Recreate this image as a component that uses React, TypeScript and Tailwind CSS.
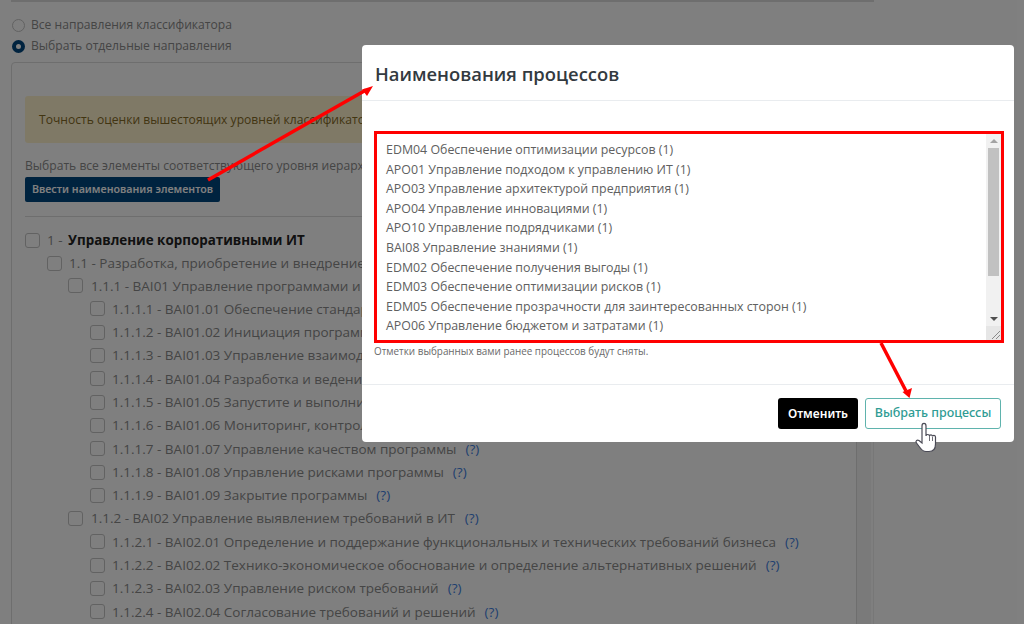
const rows: [number, string, string][] = [
  [0, '1.1 - Разработка, приобретение и внедрение ИТ-решений', ''],
  [1, '1.1.1 - BAI01 Управление программами и проектами', ''],
  [2, '1.1.1.1 - BAI01.01 Обеспечение стандартного подхода', ''],
  [2, '1.1.1.2 - BAI01.02 Инициация программы и проектов', ''],
  [2, '1.1.1.3 - BAI01.03 Управление взаимодействием', ''],
  [2, '1.1.1.4 - BAI01.04 Разработка и ведение планов', ''],
  [2, '1.1.1.5 - BAI01.05 Запустите и выполните программу', ''],
  [2, '1.1.1.6 - BAI01.06 Мониторинг, контроль и отчетность', ''],
  [2, '1.1.1.7 - BAI01.07 Управление качеством программы', '?'],
  [2, '1.1.1.8 - BAI01.08 Управление рисками программы', '?'],
  [2, '1.1.1.9 - BAI01.09 Закрытие программы', '?'],
  [1, '1.1.2 - BAI02 Управление выявлением требований в ИТ', '?'],
  [2, '1.1.2.1 - BAI02.01 Определение и поддержание функциональных и технических требований бизнеса', '?'],
  [2, '1.1.2.2 - BAI02.02 Технико-экономическое обоснование и определение альтернативных решений', '?'],
  [2, '1.1.2.3 - BAI02.03 Управление риском требований', '?'],
  [2, '1.1.2.4 - BAI02.04 Согласование требований и решений', '?'],
]

const processes = [
  'EDM04 Обеспечение оптимизации ресурсов (1)',
  'APO01 Управление подходом к управлению ИТ (1)',
  'APO03 Управление архитектурой предприятия (1)',
  'APO04 Управление инновациями (1)',
  'APO10 Управление подрядчиками (1)',
  'BAI08 Управление знаниями (1)',
  'EDM02 Обеспечение получения выгоды (1)',
  'EDM03 Обеспечение оптимизации рисков (1)',
  'EDM05 Обеспечение прозрачности для заинтересованных сторон (1)',
  'APO06 Управление бюджетом и затратами (1)',
]

const Checkbox = () => (
  <span className="h-[15px] w-[15px] shrink-0 rounded-[3px] border border-[#c4c4c4] bg-white" />
)

const App = () => {
  return (
    <div className="relative h-[624px] w-[1024px] overflow-hidden bg-white font-['Open_Sans',sans-serif] text-[13.5px] text-[#8a8a8a]">
      <div className="ml-[11px] h-[2px] w-[863px] bg-[#dcdcdc]" />
      <div className="flex h-[622px]">
        <div className="w-[857px] shrink-0 pl-[11px] pt-[13px]">
          <div className="flex h-[21px] items-center gap-[6px] pl-px">
            <span className="h-[13px] w-[13px] rounded-full border border-[#c4c4c4] bg-white" />
            <span className="text-[12.1px]">Все направления классификатора</span>
          </div>
          <div className="flex h-[21px] items-center gap-[6px] pl-px">
            <span className="h-[13px] w-[13px] rounded-full border-[4px] border-[#00467f] bg-white" />
            <span className="text-[12.1px]">Выбрать отдельные направления</span>
          </div>
          <div className="mt-[5px] h-[600px] rounded-t-[4px] border border-[#dcdcdc] px-[13px] pt-[33px]">
            <div className="flex h-[47px] items-center rounded-[3px] bg-[#fff3cd] px-[14px] pt-px text-[#856a25]">
              <span className="text-[12.1px]">Точность оценки вышестоящих уровней классификатора может быть снижена</span>
            </div>
            <p className="mt-[14px] text-[12.1px] leading-[17px]">Выбрать все элементы соответствующего уровня иерархии:</p>
            <button className="mt-[3px] block h-[25px] w-[195px] rounded-[2px] bg-[#00467f] font-['Noto_Sans',sans-serif] text-[10.7px] font-semibold text-white">
              Ввести наименования элементов
            </button>
            <div className="mt-[14px] h-px bg-[#dcdcdc]" />
            <div className="mt-[11px] flex h-[24px] items-center gap-[7px]">
              <Checkbox />
              <span>1 - <b className="ml-[2px] text-[13.4px] font-bold text-[#222222]">Управление корпоративными ИТ</b></span>
            </div>
            {rows.map(([level, text, help]) => (
              <div
                key={text}
                className={
                  level === 0
                    ? 'ml-[22px] flex h-[22px] items-center gap-[7px] whitespace-nowrap'
                    : level === 1
                      ? 'ml-[43px] flex h-[23.3px] items-center gap-[8px] whitespace-nowrap'
                      : 'ml-[65px] flex h-[23.3px] items-center gap-[7px] whitespace-nowrap'
                }
              >
                <Checkbox />
                <span>{text}</span>
                {help && <span className="ml-[2px] text-[#3f7fe0]">(?)</span>}
              </div>
            ))}
          </div>
        </div>
        <div className="mt-[100px] flex h-[522px]">
          <div className="w-[14px] bg-[#f4f4f4]" />
          <div className="ml-[2px] w-px bg-[#eeeeee]" />
        </div>
      </div>

      {/* затемнение */}
      <div className="absolute inset-0 bg-black/50" />

      {/* модальное окно */}
      <div className="absolute left-[362px] top-[45px] flex h-[397px] w-[652px] flex-col rounded-[4px] bg-white text-[#606060]">
        <div className="flex h-[56px] items-center border-b border-[#e9ecef] pl-[13px] pt-[3px]">
          <h2 className="text-[18.4px] font-semibold text-[#333a40]">Наименования процессов</h2>
        </div>
        <div className="h-[284px] border-b border-[#e9ecef] pl-[12px] pr-[10px] pt-[30px]">
          <div className="flex h-[212px] border-[3px] border-[#ff0000]">
            <div className="min-w-0 flex-1 pl-[9px] pt-[6px] text-[12.4px] leading-[19.6px]">
              {processes.map(p => (
                <div key={p} className="whitespace-nowrap">{p}</div>
              ))}
            </div>
            <div className="flex w-[15px] flex-col bg-[#f1f1f1]">
              <div className="flex h-[14px] items-center justify-center">
                <span className="h-0 w-0 border-x-[4px] border-b-[4px] border-x-transparent border-b-[#a3a3a3]" />
              </div>
              <div className="mx-[2px] h-[128px] bg-[#c1c1c1]" />
              <div className="flex-1" />
              <div className="flex h-[14px] items-center justify-center">
                <span className="h-0 w-0 border-x-[4px] border-t-[4px] border-x-transparent border-t-[#505050]" />
              </div>
              <div className="h-[14px] bg-[#e6e6e6]">
                <svg viewBox="0 0 15 14" className="h-[14px] w-[15px]">
                  <path d="M6 13 14 5M10 13 14 9" stroke="#8a8a8a" strokeWidth="1" fill="none" />
                </svg>
              </div>
            </div>
          </div>
          <p className="pt-[1px] text-[9.9px] leading-[14px] text-[#6a6a6a]">Отметки выбранных вами ранее процессов будут сняты.</p>
        </div>
        <div className="flex flex-1 items-center justify-end gap-[7px] pr-[13px] font-['Noto_Sans',sans-serif]">
          <button className="h-[31px] w-[80px] rounded-[3px] bg-black text-[12px] font-semibold text-white">Отменить</button>
          <button className="h-[31px] w-[136px] rounded-[3px] border border-[#5fb3ad] bg-white text-[12.5px] font-medium text-[#2f9c94]">Выбрать процессы</button>
        </div>
      </div>

      {/* стрелки и курсор */}
      <svg className="absolute inset-0" width="1024" height="624" viewBox="0 0 1024 624">
        <path d="M208 180 366 90" stroke="#ff0000" strokeWidth="3.5" fill="none" />
        <path d="M373 86 362 89.5 367 96Z" fill="#ff0000" />
        <path d="M881 343 906 391" stroke="#ff0000" strokeWidth="3.5" fill="none" />
        <path d="M909.5 398 902.5 392 912 388Z" fill="#ff0000" />
        <path
          d="M922 426c0-3.500 4-3.500 4 0v10c0-2 3.500-2 3.500 0 0-1.500 3-1.500 3 .5 0-1.500 3-1.500 3 .5v7c0 5-2.500 7.500-6.500 7.500h-3c-3 0-4.500-1.500-6.500-4.500l-3-4c-1.500-2 .5-3.500 2.500-2.500l3 2.500z"
          fill="#ffffff"
          stroke="#4a4a55"
          strokeWidth="1.2"
        />
        <path d="M929.500 436v5M932.500 437v4" stroke="#4a4a55" strokeWidth="0.8" fill="none" />
      </svg>
    </div>
  )
}

export default App
